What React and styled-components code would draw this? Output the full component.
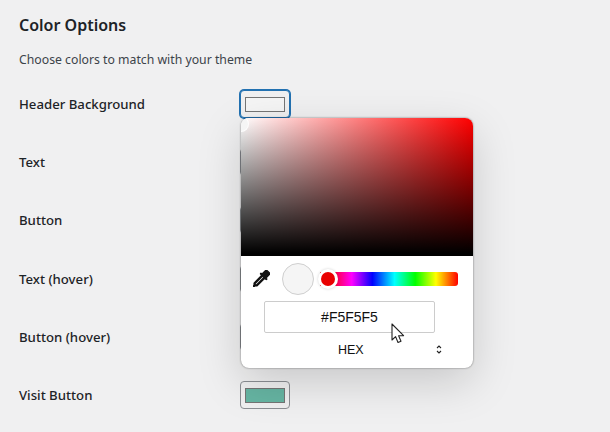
import React from "react";
import styled, { createGlobalStyle } from "styled-components";
import { BsEyedropper } from "react-icons/bs";

const Global = createGlobalStyle`
  html, body { margin: 0; padding: 0; background: #f0f0f1; overflow: hidden; }
  body { font-family: "Noto Sans", "Open Sans", sans-serif; }
`;

const Page = styled.div`
  position: relative;
  width: 610px;
  height: 432px;
  overflow: hidden;
  padding: 14px 0 0 19px;
  box-sizing: border-box;
`;

const Title = styled.h2`
  margin: 0;
  font-size: 16px;
  line-height: 22px;
  font-weight: 600;
  color: #1d2327;
`;

const Description = styled.p`
  margin: 14px 0 0;
  font-size: 12.25px;
  line-height: 20px;
  color: #3c434a;
`;

const Rows = styled.div`
  display: flex;
  flex-direction: column;
  margin-top: 5px;
`;

const Row = styled.div`
  display: flex;
  align-items: center;
  height: 58.2px;
`;

const Label = styled.span`
  width: 221px;
  font-size: 13.2px;
  font-weight: 500;
  color: #1d2327;
`;

const Swatch = styled.button`
  display: flex;
  align-items: center;
  justify-content: center;
  width: 50px;
  height: 28px;
  padding: 0;
  box-sizing: border-box;
  border-radius: 4px;
  background: #f0f0f1;
  border: 1px solid ${(p) => (p.$focused ? "#2271b1" : "#8c8f94")};
  box-shadow: ${(p) => (p.$focused ? "0 0 0 1px #2271b1" : "none")};
`;

const SwatchFill = styled.span`
  display: block;
  width: 40px;
  height: 15px;
  box-sizing: border-box;
  border: 1px solid #757575;
  background: ${(p) => p.$color};
`;

const Popover = styled.div`
  position: absolute;
  left: 241px;
  top: 118px;
  width: 232px;
  height: 250px;
  background: #fff;
  border-radius: 8px;
  box-shadow: 0 0 2px rgba(0, 0, 0, 0.55), 0 14px 44px rgba(0, 0, 0, 0.17);
  overflow: hidden;
`;

const Saturation = styled.div`
  position: relative;
  height: 138px;
  background:
    linear-gradient(to top, #000 2%, rgba(0, 0, 0, 0)),
    linear-gradient(to right, #fff, #f00);
`;

const Handle = styled.span`
  position: absolute;
  left: -7px;
  top: -1px;
  width: 14px;
  height: 14px;
  border-radius: 50%;
  background: #f5f5f5;
  box-shadow: 0 0 0 1px rgba(255, 255, 255, 0.9);
`;

const Controls = styled.div`
  display: flex;
  align-items: center;
  height: 32px;
  margin-top: 7px;
  padding-left: 12px;
`;

const Dropper = styled.span`
  display: flex;
  width: 18px;
  height: 18px;
  color: #111;
`;

const Preview = styled.span`
  width: 30px;
  height: 30px;
  margin-left: 11px;
  border-radius: 50%;
  background: #f5f5f5;
  border: 1px solid #cfcfcf;
`;

const Hue = styled.div`
  position: relative;
  width: 138px;
  height: 14px;
  margin-left: 6px;
  border-radius: 0 3px 3px 0;
  background: linear-gradient(
    to right,
    #f00 7%,
    #f0f 23%,
    #00f 38%,
    #0ff 54%,
    #0f0 69%,
    #ff0 84%,
    #f00 100%
  );
`;

const HueThumb = styled.span`
  position: absolute;
  left: 1px;
  top: 0;
  width: 14px;
  height: 14px;
  border-radius: 50%;
  background: #e90000;
  box-shadow: 0 0 0 3px #fff, 0 0 3px 3px rgba(0, 0, 0, 0.18);
`;

const HexField = styled.div`
  display: flex;
  align-items: center;
  justify-content: center;
  width: 171px;
  height: 32px;
  margin: 6px 0 0 23px;
  box-sizing: border-box;
  border: 1px solid #ccc;
  border-radius: 2px;
  font-family: "Liberation Sans", Arial, sans-serif;
  font-size: 14px;
  color: #111;
`;

const Format = styled.div`
  display: flex;
  align-items: center;
  gap: 74px;
  height: 33px;
  padding-left: 97px;
  font-family: "Liberation Sans", Arial, sans-serif;
  font-size: 12.5px;
  color: #111;
`;

const FormatName = styled.span`
  width: 24px;
  white-space: nowrap;
`;

const Cursor = styled.svg`
  position: absolute;
  left: 391px;
  top: 323px;
`;

const rows = [
  ["Header Background", "#f5f5f5", true],
  ["Text", "#1d2327"],
  ["Button", "#1d2327"],
  ["Text (hover)", "#1d2327"],
  ["Button (hover)", "#1d2327"],
  ["Visit Button", "#66b5a3"],
];

export default function App() {
  return (
    <Page>
      <Global />
      <Title>Color Options</Title>
      <Description>Choose colors to match with your theme</Description>
      <Rows>
        {rows.map(([label, color, focused]) => (
          <Row key={label}>
            <Label>{label}</Label>
            <Swatch $focused={focused}>
              <SwatchFill $color={color} />
            </Swatch>
          </Row>
        ))}
      </Rows>
      <Popover>
        <Saturation>
          <Handle />
        </Saturation>
        <Controls>
          <Dropper>
            <BsEyedropper size={17} strokeWidth={1.2} stroke="currentColor" />
          </Dropper>
          <Preview />
          <Hue>
            <HueThumb />
          </Hue>
        </Controls>
        <HexField>#F5F5F5</HexField>
        <Format>
          <FormatName>HEX</FormatName>
          <svg width="6" height="9" viewBox="0 0 6 9" fill="none" stroke="#222" strokeWidth="1.1">
            <path d="M1 3 L3 1 L5 3" />
            <path d="M1 6 L3 8 L5 6" />
          </svg>
        </Format>
      </Popover>
      <Cursor width="15" height="22" viewBox="0 0 15 22">
        <path
          d="M1 1 V17 L4.6 13.6 L7 19.5 L10 18.3 L7.6 12.8 L12.6 12.6 Z"
          fill="#fff"
          stroke="#222"
          strokeWidth="1.1"
          strokeLinejoin="round"
        />
      </Cursor>
    </Page>
  );
}
